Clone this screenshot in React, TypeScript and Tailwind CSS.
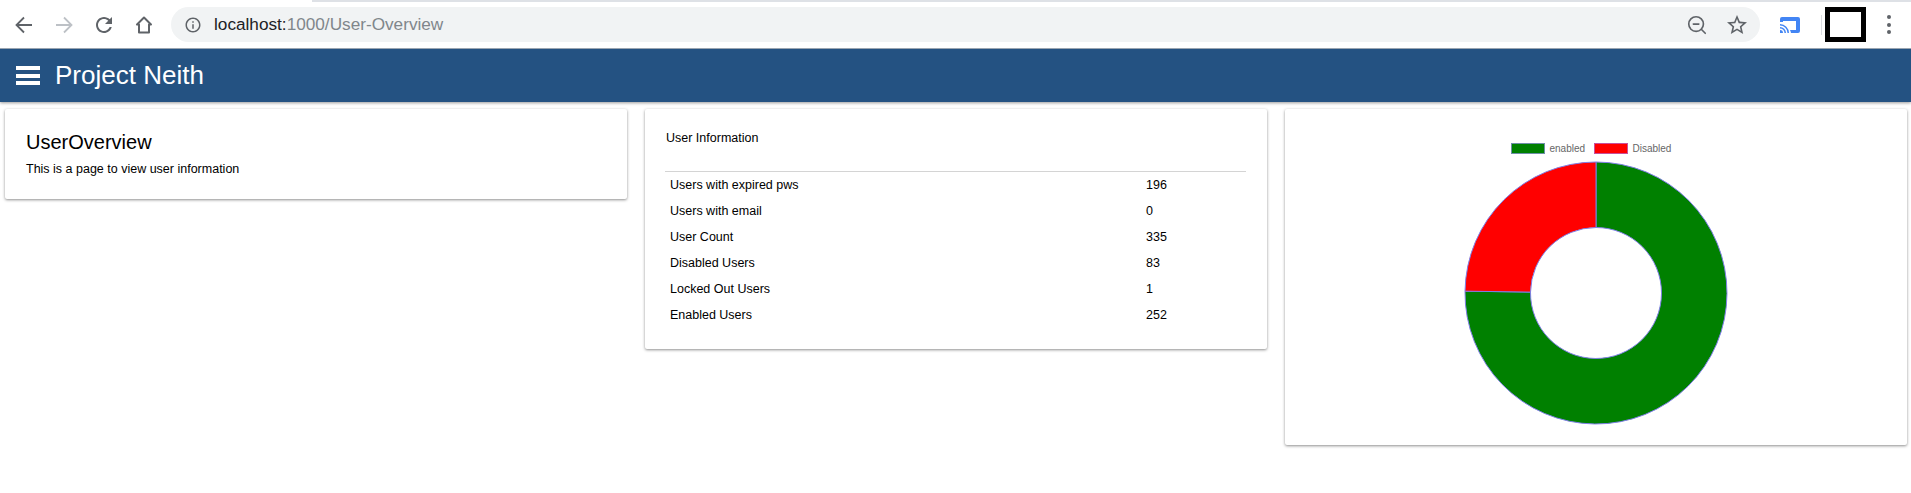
import { ZoomOut } from "lucide-react";

const rows = [
  { label: "Users with expired pws", value: "196" },
  { label: "Users with email", value: "0" },
  { label: "User Count", value: "335" },
  { label: "Disabled Users", value: "83" },
  { label: "Locked Out Users", value: "1" },
  { label: "Enabled Users", value: "252" },
];

function arc(a0: number, a1: number, r: number, R: number) {
  const p = (rad: number, a: number) => {
    const t = (a - 90) * (Math.PI / 180);
    return `${(131 + rad * Math.cos(t)).toFixed(2)} ${(131 + rad * Math.sin(t)).toFixed(2)}`;
  };
  const large = a1 - a0 > 180 ? 1 : 0;
  return `M${p(R, a0)} A${R} ${R} 0 ${large} 1 ${p(R, a1)} L${p(r, a1)} A${r} ${r} 0 ${large} 0 ${p(r, a0)} Z`;
}

function Browser() {
  return (
    <div className="relative flex h-12 items-center bg-white pt-px">
      <div className="absolute top-0 left-[312px] right-0 h-[2px] bg-[#dee1e6]" />
      <svg viewBox="0 0 24 24" fill="none" stroke="#5f6368" strokeWidth="1.8" className="ml-3 h-6 w-6">
        <path d="M20 12H5M12 4.500 4.500 12l7.500 7.500" />
      </svg>
      <svg viewBox="0 0 24 24" fill="none" stroke="#bdc1c6" strokeWidth="1.8" className="ml-4 h-6 w-6">
        <path d="M4 12h15M12 4.500l7.500 7.500-7.500 7.500" />
      </svg>
      <svg viewBox="0 0 24 24" fill="#5f6368" className="ml-4 h-6 w-6">
        <path d="M17.650 6.350C16.200 4.900 14.210 4 12 4c-4.420 0-7.990 3.580-7.990 8s3.570 8 7.990 8c3.730 0 6.840-2.550 7.730-6h-2.080c-.82 2.330-3.040 4-5.650 4-3.310 0-6-2.690-6-6s2.690-6 6-6c1.660 0 3.140.69 4.220 1.780L13 11h7V4l-2.350 2.350z" />
      </svg>
      <svg viewBox="0 0 24 24" fill="none" stroke="#5f6368" strokeWidth="2" className="ml-4 h-6 w-6">
        <path d="M12 4.500 5 11.500h2V19.500h10V11.500h2z" strokeLinejoin="round" />
      </svg>
      <div className="ml-[15px] flex h-[35px] w-[1589px] items-center rounded-full bg-[#f1f3f4]">
        <svg viewBox="0 0 24 24" fill="#5f6368" className="ml-[13px] h-[18px] w-[18px]">
          <path d="M11 7h2v2h-2zm0 4h2v6h-2zm1-9C6.480 2 2 6.480 2 12s4.480 10 10 10 10-4.480 10-10S17.520 2 12 2zm0 18c-4.410 0-8-3.590-8-8s3.590-8 8-8 8 3.590 8 8-3.590 8-8 8z" />
        </svg>
        <span className="ml-[12px] font-['Liberation_Sans',sans-serif] text-[17.200px] text-[#202124]">
          localhost:<span className="text-[#80868b]">1000/User-Overview</span>
        </span>
        <div className="ml-auto flex items-center">
          <ZoomOut className="h-[22px] w-[22px] text-[#5f6368]" strokeWidth={1.8} />
          <svg viewBox="0 0 24 24" fill="#5f6368" className="mr-[11px] ml-[17px] h-6 w-6">
            <path d="M22 9.240l-7.190-.62L12 2 9.190 8.630 2 9.240l5.460 4.730L5.820 21 12 17.270 18.180 21l-1.630-7.030L22 9.240zM12 15.400l-3.760 2.270 1-4.280-3.320-2.880 4.380-.38L12 6.100l1.710 4.040 4.380.38-3.320 2.880 1 4.280L12 15.400z" />
          </svg>
        </div>
      </div>
      <svg viewBox="0 0 20 16" className="ml-5 h-4 w-5">
        <path d="M2 0h16a2 2 0 0 1 2 2v12a2 2 0 0 1-2 2h-7a9 9 0 0 0-1-3h6V4H3v1H0V2a2 2 0 0 1 2-2z" fill="#4285f4" />
        <path d="M0 7a9 9 0 0 1 9 9H7.500A7.500 7.500 0 0 0 0 8.500zM0 10a6 6 0 0 1 6 6H4.500A4.500 4.500 0 0 0 0 11.500zM0 13a3 3 0 0 1 3 3H0z" fill="#4285f4" />
      </svg>
      <div className="ml-[21px] h-5 w-px bg-[#dadce0]" />
      <div className="ml-[3px] h-[35px] w-[41px] border-[5px] border-black bg-white" />
      <div className="ml-[21px] flex flex-col gap-[3.500px]">
        <span className="h-1 w-1 rounded-full bg-[#5f6368]" />
        <span className="h-1 w-1 rounded-full bg-[#5f6368]" />
        <span className="h-1 w-1 rounded-full bg-[#5f6368]" />
      </div>
    </div>
  );
}

export default function App() {
  return (
    <div className="min-h-[493px] bg-white font-['Liberation_Sans',Arial,sans-serif] text-black">
      <Browser />
      <header className="flex h-[54px] items-center border-t border-[#9aa5b1] bg-[#245282] shadow-[0_1px_3px_rgba(0,0,0,0.4)]">
        <div className="ml-4 flex h-[19px] w-6 flex-col justify-between">
          <span className="h-1 bg-white" />
          <span className="h-1 bg-white" />
          <span className="h-1 bg-white" />
        </div>
        <h1 className="mb-px ml-[15px] text-[26px] leading-none text-white">Project Neith</h1>
      </header>

      <main className="grid grid-cols-[622px_622px_622px] items-start gap-[18px] pt-[7px] pl-[5px]">
        <section className="h-[90px] rounded-[2px] bg-white pt-[21px] pl-[21px] shadow-[0_1px_3px_rgba(0,0,0,0.45)]">
          <h2 className="text-[20px] leading-[24px]">UserOverview</h2>
          <p className="mt-2 text-[12.500px] leading-[14px]">This is a page to view user information</p>
        </section>

        <section className="h-[240px] rounded-[2px] bg-white pt-[22px] pr-[21px] pl-[20px] shadow-[0_1px_3px_rgba(0,0,0,0.45)]">
          <h3 className="ml-px text-[12.500px] leading-[14px]">User Information</h3>
          <div className="mt-[26px] border-t border-[#d4d4d4]">
            {rows.map((row) => (
              <div key={row.label} className="flex h-[26px] items-center pl-[5px] text-[12.500px]">
                <span className="w-[476px]">{row.label}</span>
                <span>{row.value}</span>
              </div>
            ))}
          </div>
        </section>

        <section className="flex h-[336px] flex-col items-center rounded-[2px] bg-white pt-[34px] shadow-[0_1px_3px_rgba(0,0,0,0.45)]">
          <div className="flex h-[11px] items-center text-[10px] text-[#666]">
            <span className="h-[11px] w-[34px] border border-[#6f8fa8] bg-[#008000]" />
            <span className="ml-[5px] w-[44px]">enabled</span>
            <span className="h-[11px] w-[34px] border border-[#c8509a] bg-[#ff0000]" />
            <span className="ml-[5px] w-[49px]">Disabled</span>
          </div>
          <svg viewBox="0 0 262 262" className="mt-2 h-[262px] w-[262px] overflow-visible">
            <path d={arc(0, 270.8, 65.5, 131)} fill="#008000" stroke="#7f7fe6" strokeWidth="1" />
            <path d={arc(270.8, 360, 65.5, 131)} fill="#ff0000" stroke="#7f7fe6" strokeWidth="1" />
          </svg>
        </section>
      </main>
    </div>
  );
}
